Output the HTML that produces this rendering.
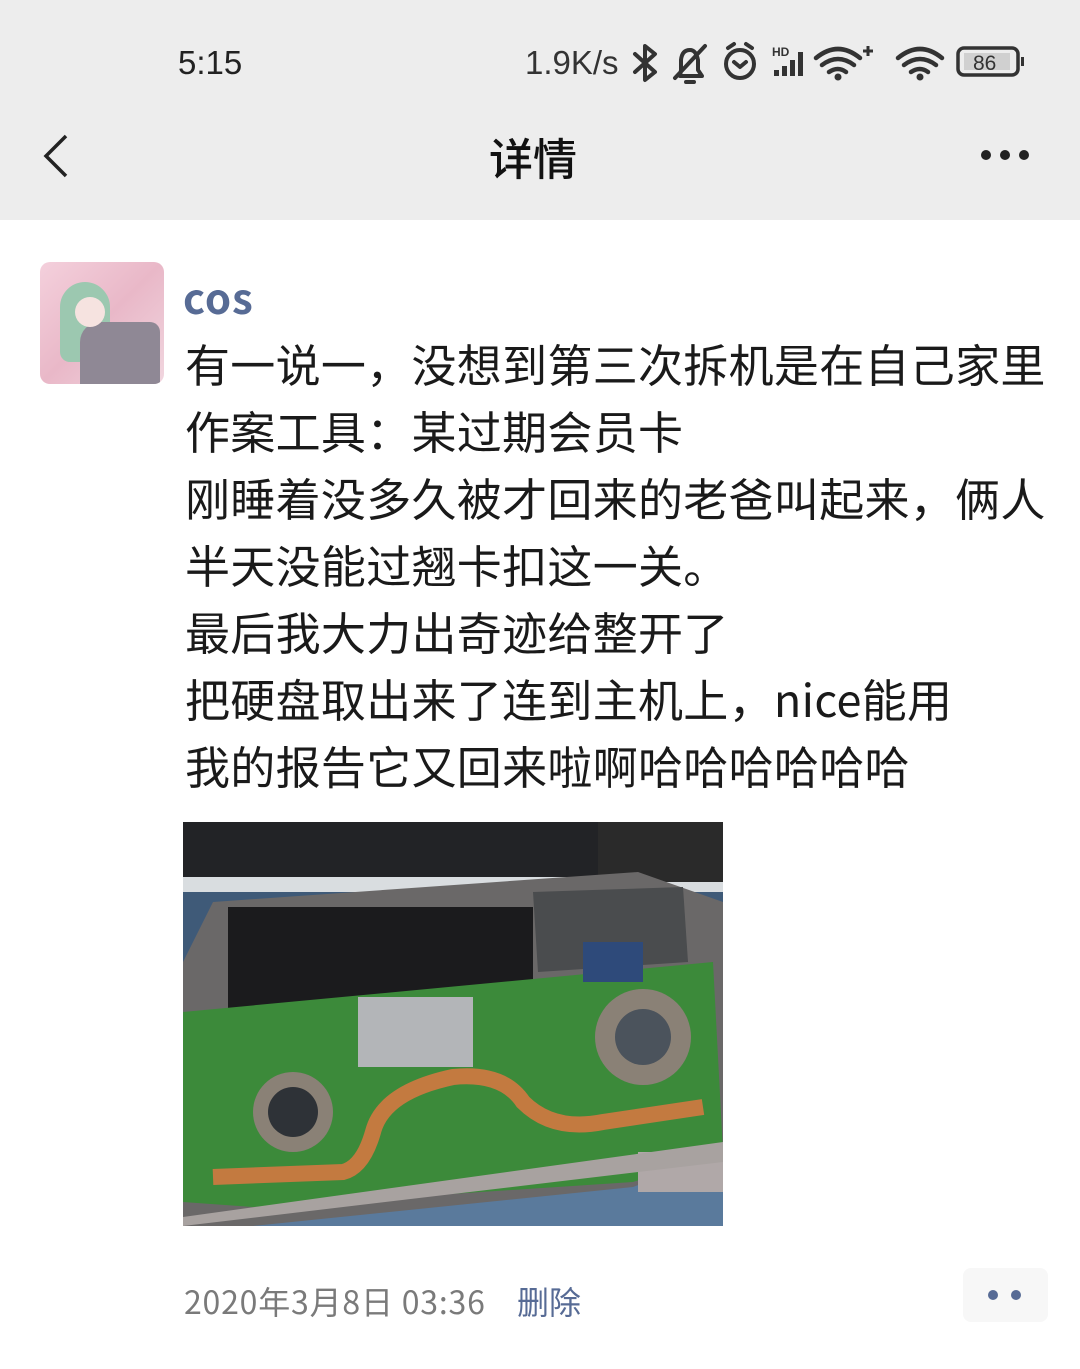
<!DOCTYPE html>
<html><head><meta charset="utf-8"><style>
*{margin:0;padding:0;box-sizing:border-box}
body{width:1080px;height:1369px;background:#fff;position:relative;overflow:hidden;font-family:"Liberation Sans","Noto Sans CJK SC",sans-serif}
.hdr{position:absolute;left:0;top:0;width:1080px;height:220px;background:#ededed}
.abs{position:absolute;white-space:nowrap}
.txt{position:absolute;left:185px;top:329px;font-size:45px;line-height:67px;color:#1a1a1a;font-family:"Noto Sans CJK SC",sans-serif;letter-spacing:0.3px;white-space:nowrap}
</style></head><body>
<div class="hdr"></div>
<div class="abs" style="left:178px;top:44px;font-size:33px;color:#222">5:15</div>
<div class="abs" style="left:525px;top:44px;font-size:33px;color:#333">1.9K/s</div>
<svg class="abs" style="left:630px;top:40px" width="400" height="46" viewBox="0 0 400 46">
 <g fill="none" stroke="#333" stroke-width="4" stroke-linecap="round" stroke-linejoin="round">
  <path d="M5 14 L25 32 L15 40 L15 6 L25 14 L5 32"/>
  <path d="M50 36 L72 36 L68 30 L68 20 Q66 10 60 10 Q52 10 51 20 L51 30 Z M45 38 L75 6 M56 42 L64 42"/>
  <circle cx="110" cy="24" r="14"/><path d="M104 22 L110 27 L116 22 M98 8 L104 4 M122 8 L116 4"/>
 </g>
 <text x="142" y="16" font-size="12" font-weight="bold" fill="#333" font-family="Liberation Sans">HD</text>
 <g fill="#333"><rect x="144" y="30" width="5" height="6"/><rect x="152" y="26" width="5" height="10"/><rect x="160" y="20" width="5" height="16"/><rect x="168" y="12" width="5" height="24"/></g>
 <g fill="none" stroke="#333" stroke-width="4.5" stroke-linecap="round">
  <path d="M186 18 Q208 0 230 18 M192 25 Q208 13 224 25 M199 32 Q208 26 216 32"/>
  <path d="M268 18 Q290 0 312 18 M274 25 Q290 13 306 25 M281 32 Q290 26 298 32"/>
 </g>
 <path d="M238 6 V16 M233 11 H243" stroke="#333" stroke-width="3"/>
 <circle cx="208" cy="37" r="3.5" fill="#333"/><circle cx="290" cy="37" r="3.5" fill="#333"/>
 <rect x="328" y="8" width="60" height="27" rx="6" fill="none" stroke="#333" stroke-width="3.5"/>
 <rect x="334" y="13" width="46" height="17" fill="#d0d0d0"/>
 <rect x="391" y="17" width="3" height="9" fill="#333"/>
 <text x="343" y="30" font-size="21" fill="#333" font-family="Liberation Sans">86</text>
</svg>
<svg class="abs" style="left:38px;top:132px" width="34" height="48"><path d="M28 4 L8 24 L28 44" fill="none" stroke="#222" stroke-width="3.5"/></svg>
<div class="abs" style="left:489px;top:124px;font-size:44px;color:#111;font-family:'Noto Sans CJK SC',sans-serif;font-weight:500">详情</div>
<svg class="abs" style="left:978px;top:146px" width="56" height="18"><circle cx="8" cy="9" r="5" fill="#222"/><circle cx="27" cy="9" r="5" fill="#222"/><circle cx="46" cy="9" r="5" fill="#222"/></svg>

<div class="abs" style="left:40px;top:262px;width:124px;height:122px;border-radius:10px;overflow:hidden;background:linear-gradient(135deg,#f4d0dc,#e9b8c8 50%,#f1d6df)">
 <div style="position:absolute;left:20px;top:20px;width:50px;height:80px;background:#9cc8b0;border-radius:25px 25px 10px 10px"></div>
 <div style="position:absolute;left:40px;top:60px;width:80px;height:70px;background:#8f8895;border-radius:20px 10px 0 0"></div>
 <div style="position:absolute;left:35px;top:35px;width:30px;height:30px;background:#f6e3e0;border-radius:50%"></div>
</div>
<div class="abs" style="left:183px;top:266px;font-size:42px;color:#576b95;font-weight:bold;font-family:'Noto Sans CJK SC',sans-serif;letter-spacing:1px">cos</div>
<div class="txt">有一说一，没想到第三次拆机是在自己家里<br>作案工具：某过期会员卡<br>刚睡着没多久被才回来的老爸叫起来，俩人<br>半天没能过翘卡扣这一关。<br>最后我大力出奇迹给整开了<br>把硬盘取出来了连到主机上，nice能用<br>我的报告它又回来啦啊哈哈哈哈哈哈</div>

<svg class="abs" style="left:183px;top:822px" width="540" height="404" viewBox="0 0 540 404">
 <rect width="540" height="404" fill="#3f5a78"/>
 <rect width="540" height="70" fill="#d9dde0"/>
 <rect x="0" y="0" width="415" height="55" fill="#222326"/>
 <rect x="415" y="0" width="125" height="60" fill="#2a2a2a"/>
 <rect x="0" y="330" width="540" height="74" fill="#5a7a9c"/>
 <path d="M30 80 L455 50 L540 80 L540 330 L450 365 L70 404 L0 404 L0 140 Z" fill="#6a6868"/>
 <rect x="45" y="85" width="305" height="110" fill="#1b1b1d"/>
 <path d="M350 70 L500 65 L505 140 L355 150 Z" fill="#4a4c4e"/>
 <path d="M0 190 L530 140 L540 330 L450 360 L70 385 L0 380 Z" fill="#3c8a3a"/>
 <rect x="175" y="175" width="115" height="70" fill="#b3b5b8"/>
 <rect x="455" y="330" width="85" height="40" fill="#b0a8a8"/>
 <path d="M0 395 L540 320 L540 340 L0 404 Z" fill="#a8a2a0"/>
 <circle cx="110" cy="290" r="40" fill="#8a8176"/><circle cx="110" cy="290" r="25" fill="#2e3237"/>
 <circle cx="460" cy="215" r="48" fill="#8a8176"/><circle cx="460" cy="215" r="28" fill="#4b535c"/>
 <path d="M30 355 L160 350 Q180 345 190 310 Q200 270 270 255 Q320 250 340 280 Q370 310 420 300 L520 285" fill="none" stroke="#c37a40" stroke-width="16"/>
 <rect x="400" y="120" width="60" height="40" fill="#2e4a7a"/>
</svg>

<div class="abs" style="left:184px;top:1278px;font-size:32px;color:#7a7a7a;font-family:'Noto Sans CJK SC',sans-serif;letter-spacing:0.8px">2020年3月8日 03:36</div>
<div class="abs" style="left:517px;top:1278px;font-size:32px;color:#576b95;font-family:'Noto Sans CJK SC',sans-serif">删除</div>
<div class="abs" style="left:963px;top:1268px;width:85px;height:54px;background:#f7f7f7;border-radius:8px"></div>
<svg class="abs" style="left:985px;top:1287px" width="40" height="16"><circle cx="8" cy="8" r="5" fill="#576b95"/><circle cx="31" cy="8" r="5" fill="#576b95"/></svg>
</body></html>
